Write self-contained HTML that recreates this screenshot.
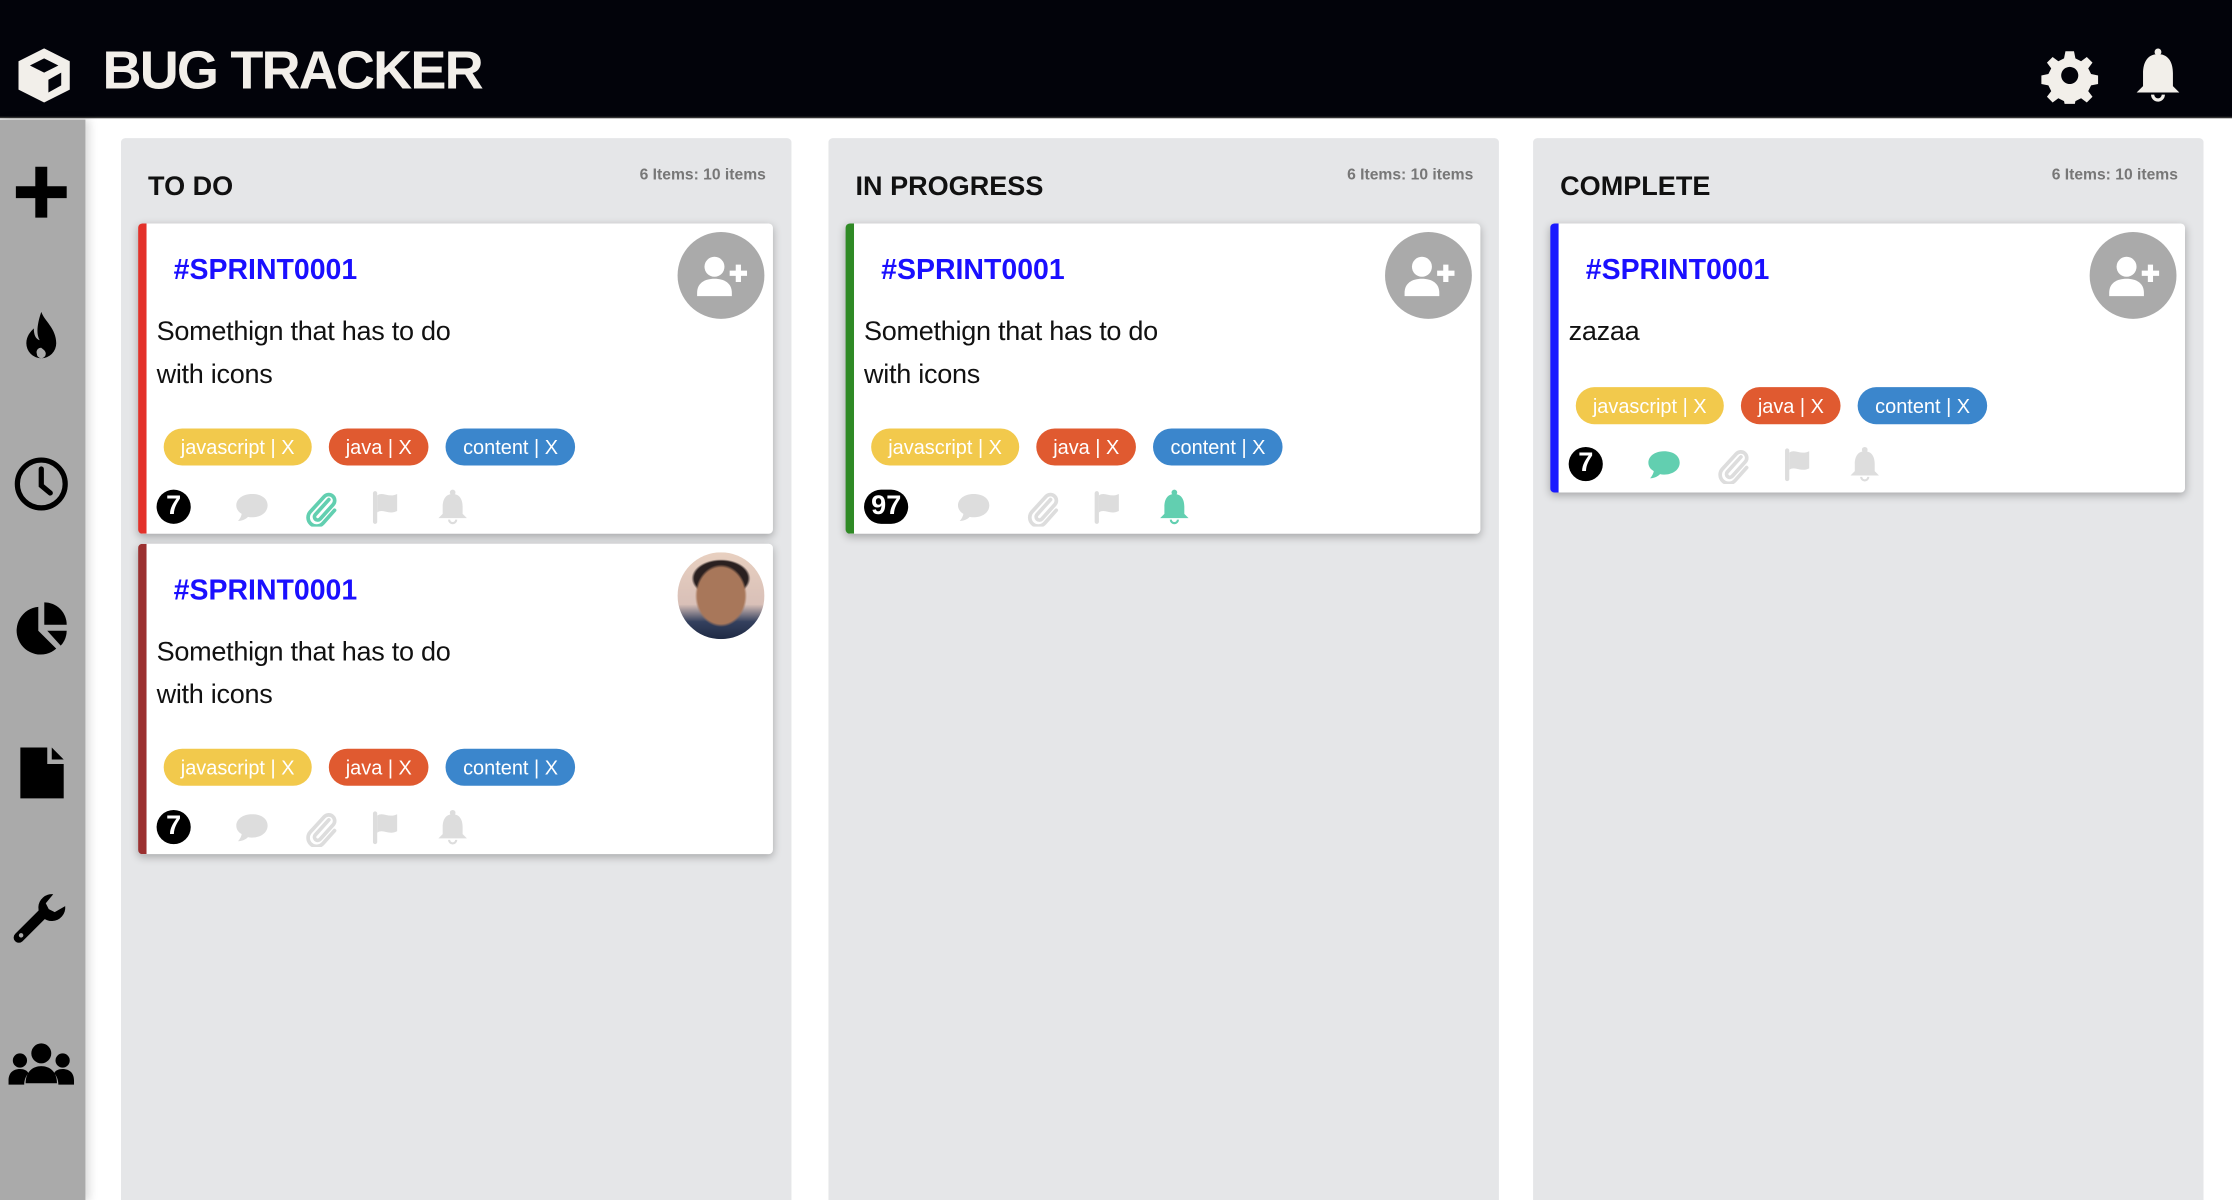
<!DOCTYPE html>
<html><head><meta charset="utf-8">
<style>
*{margin:0;padding:0;box-sizing:border-box}
html,body{width:2232px;height:1200px;overflow:hidden;background:#fff;font-family:"Liberation Sans",sans-serif}
#s{width:1568px;height:843px;transform:scale(1.423469);transform-origin:0 0;position:relative;background:#fff}
.hd{position:absolute;left:0;top:0;width:1568px;height:83px;background:#02030a;border-bottom:1px solid #333}
.ttl{position:absolute;left:72px;top:29px;font-size:38px;font-weight:bold;color:#f2efea;letter-spacing:-1.3px}
.sb{position:absolute;left:0;top:84px;width:60px;height:760px;background:#aaa;box-shadow:3px 0 6px rgba(0,0,0,.15)}
.sb svg{position:absolute;left:8px;width:42px;height:42px}
.col{position:absolute;top:97px;width:471px;height:760px;background:#e5e6e8;border-radius:3px}
.ch{position:absolute;left:19px;top:24px;font-size:19px;font-weight:bold;color:#111}
.cn{position:absolute;right:18px;top:20px;font-size:11px;font-weight:bold;color:#777}
.card{position:absolute;left:12px;width:446px;background:#fff;border-left:6px solid red;border-radius:3px;box-shadow:0 2px 6px rgba(0,0,0,.28)}
.sp{position:absolute;left:19px;top:22px;font-size:20px;font-weight:bold;color:#1a0fff}
.ds{position:absolute;left:7px;top:62px;font-size:19px;line-height:30px;color:#111;letter-spacing:-0.2px}
.tags{position:absolute;left:12px;display:flex;gap:12px}
.tg{height:26px;border-radius:13px;color:#fff;font-size:14px;line-height:26px;padding:0 12px}
.y{background:#f2c94c}.r{background:#e05a30}.b{background:#3b86cc}
.ft{position:absolute;left:7px;height:30px;width:300px}
.ft > *{position:absolute}
.bd{left:0;top:3px;height:24px;min-width:24px;border-radius:12px;background:#000;color:#fff;font-size:19px;font-weight:bold;line-height:24px;text-align:center;padding:0 3px}
.ft svg{width:28px;height:28px;top:1px}
.av{position:absolute;right:6px;top:6px;width:61px;height:61px;border-radius:50%;background:#aaa}
</style></head><body><div id="s">
<svg width="0" height="0" style="position:absolute">
<defs>
<symbol id="cm" viewBox="0 0 28 28"><path d="M14 5C7.5 5 3 8.5 3 13c0 2.6 1.5 4.7 3.8 6-.3 1.8-1.3 3.5-2.6 5 3 0 5.5-1.3 7-2.9.9.2 1.8.3 2.8.3 6.5 0 11-3.6 11-8.4S20.5 5 14 5z" fill="currentColor"/></symbol>
<symbol id="cl" viewBox="0 0 28 28"><path d="M20 9l-9.5 10.5a2.3 2.3 0 0 0 3.4 3.1L23 12.5a4.2 4.2 0 0 0-6.2-5.7L7 17.5a6 6 0 0 0 8.9 8.1L24 16.5" fill="none" stroke="currentColor" stroke-width="2.6" stroke-linecap="round"/></symbol>
<symbol id="fl" viewBox="0 0 28 28"><rect x="4" y="3" width="3" height="23" rx="1.5" fill="currentColor"/><path d="M7 6c4-3 8 2 14-1v12c-6 3-10-2-14 1z" fill="currentColor"/></symbol>
<symbol id="bl" viewBox="0 0 28 28"><circle cx="14" cy="4" r="2" fill="currentColor"/><path d="M14 5c-5 0-7 4-7 9v5l-3 3h20l-3-3v-5c0-5-2-9-7-9z" fill="currentColor"/><path d="M11.5 23a2.5 2.5 0 0 0 5 0" fill="none" stroke="currentColor" stroke-width="1.5"/></symbol>
<symbol id="up" viewBox="0 0 40 40"><circle cx="17" cy="16" r="4.6" fill="#fff"/><path d="M9 28c0-4.5 3.5-6.5 8-6.5s8 2 8 6.5v1.5H9z" fill="#fff"/><path d="M28 15v8M24 19h8" stroke="#fff" stroke-width="2.4"/></symbol>
</defs></svg>

<div class="hd">
<svg style="position:absolute;left:10px;top:32px" width="42" height="42" viewBox="0 0 42 42"><path d="M21 2L39 11v20L21 40 3 31V11z" fill="#f2efea"/><path d="M21 9L31 14 21 19 11 14z" fill="#02030a"/><path d="M24 24l9-5v9l-9 5z" fill="#02030a"/></svg>
<div class="ttl">BUG TRACKER</div>
<svg style="position:absolute;left:1434px;top:33px" width="40" height="40" viewBox="0 0 40 40"><path fill="#f2efea" fill-rule="evenodd" d="M17 3h6l1 5 4 2 4-3 4 4-3 4 2 4 5 1v6l-5 1-2 4 3 4-4 4-4-3-4 2-1 5h-6l-1-5-4-2-4 3-4-4 3-4-2-4-5-1v-6l5-1 2-4-3-4 4-4 4 3 4-2zM20 14a6 6 0 1 0 0.01 0z"/></svg>
<svg style="position:absolute;left:1495px;top:31px" width="42" height="44" viewBox="0 0 28 28"><circle cx="14" cy="3" r="1.6" fill="#f2efea"/><path d="M14 4c-5 0-7 4-7 9v6l-3 3h20l-3-3v-6c0-5-2-9-7-9z" fill="#f2efea"/><path d="M11.5 23a2.5 2.5 0 0 0 5 0" fill="none" stroke="#f2efea" stroke-width="1.5"/></svg>
</div>

<div class="sb">
<svg style="top:30px" viewBox="0 0 40 40"><path d="M16 3h8v13h13v8H24v13h-8V24H3v-8h13z" fill="#000"/></svg>
<svg style="top:133px" viewBox="0 0 40 40"><path d="M20 2c2 6 10 11 10 21a10 10 0 0 1-20 0c0-5 3-8 5-10 0 4 1 7 4 8-3-5-1-13 1-19zM20 26a3 3 0 0 0-3 4 3 3 0 0 0 6 0c0-2-2-3-3-4z" fill="#000" fill-rule="evenodd"/></svg>
<svg style="top:235px" viewBox="0 0 40 40"><circle cx="20" cy="20" r="16" fill="none" stroke="#000" stroke-width="3.5"/><path d="M20 10v11l6 5" fill="none" stroke="#000" stroke-width="3.5" stroke-linecap="round"/></svg>
<svg style="top:336px" viewBox="0 0 40 40"><path d="M18 6v16l12 12A16 16 0 1 1 18 6z" fill="#000"/><path d="M22 3a15 15 0 0 1 15 15H22z" fill="#000"/><path d="M24 22h13a15 15 0 0 1-4 10z" fill="#000"/></svg>
<svg style="top:438px" viewBox="0 0 40 40"><path d="M6 3h18v11h11v23H6z" fill="#000"/><path d="M27 3l8 8h-8z" fill="#000"/></svg>
<svg style="top:540px" viewBox="0 0 40 40"><path d="M5 33L21 17" stroke="#000" stroke-width="7" stroke-linecap="round"/><path d="M36 12a9 9 0 1 1-8-8l-5 6 2 4 4 2z" fill="#000"/><circle cx="6.5" cy="31.5" r="1.5" fill="#aaa"/></svg>
<svg style="top:643px;left:4px;width:50px" viewBox="0 0 50 40"><circle cx="25" cy="12" r="7" fill="#000"/><circle cx="10" cy="17" r="5" fill="#000"/><circle cx="40" cy="17" r="5" fill="#000"/><path d="M14 33c0-8 5-12 11-12s11 4 11 12z" fill="#000"/><path d="M2 31c0-5 3-8 8-8 3 0 5 1 6 3-2 2-3 5-3 8H2zM48 31c0-5-3-8-8-8-3 0-5 1-6 3 2 2 3 5 3 8h11z" fill="#000"/></svg>
</div>

<!-- TO DO -->
<div class="col" style="left:85px">
<div class="ch">TO DO</div><div class="cn">6 Items: 10 items</div>
<div class="card" style="top:60px;height:218px;border-left-color:#e3312a">
<div class="sp">#SPRINT0001</div>
<div class="ds">Somethign that has to do<br>with icons</div>
<div class="av"><svg width="61" height="61" viewBox="0 0 40 40"><use href="#up"/></svg></div>
<div class="tags" style="top:144px"><span class="tg y">javascript | X</span><span class="tg r">java | X</span><span class="tg b">content | X</span></div>
<div class="ft" style="top:184px"><span class="bd">7</span>
<svg style="left:53px;color:#ddd"><use href="#cm"/></svg><svg style="left:101px;color:#62cfb0"><use href="#cl"/></svg><svg style="left:148px;color:#ddd"><use href="#fl"/></svg><svg style="left:194px;color:#ddd"><use href="#bl"/></svg></div>
</div>
<div class="card" style="top:285px;height:218px;border-left-color:#9b3030">
<div class="sp">#SPRINT0001</div>
<div class="ds">Somethign that has to do<br>with icons</div>
<div class="av" style="background:radial-gradient(ellipse 30% 36% at 50% 50%,#a8775a 0 90%,transparent 100%),radial-gradient(ellipse 34% 22% at 50% 30%,#2a2020 0 90%,transparent 100%),linear-gradient(180deg,#e8d0c0 0%,#d9c0b8 60%,#34405e 80%,#1f2a44 100%)"></div>
<div class="tags" style="top:144px"><span class="tg y">javascript | X</span><span class="tg r">java | X</span><span class="tg b">content | X</span></div>
<div class="ft" style="top:184px"><span class="bd">7</span>
<svg style="left:53px;color:#ddd"><use href="#cm"/></svg><svg style="left:101px;color:#ddd"><use href="#cl"/></svg><svg style="left:148px;color:#ddd"><use href="#fl"/></svg><svg style="left:194px;color:#ddd"><use href="#bl"/></svg></div>
</div>
</div>

<!-- IN PROGRESS -->
<div class="col" style="left:582px">
<div class="ch">IN PROGRESS</div><div class="cn">6 Items: 10 items</div>
<div class="card" style="top:60px;height:218px;border-left-color:#2f8a25">
<div class="sp">#SPRINT0001</div>
<div class="ds">Somethign that has to do<br>with icons</div>
<div class="av"><svg width="61" height="61" viewBox="0 0 40 40"><use href="#up"/></svg></div>
<div class="tags" style="top:144px"><span class="tg y">javascript | X</span><span class="tg r">java | X</span><span class="tg b">content | X</span></div>
<div class="ft" style="top:184px"><span class="bd" style="left:0;padding:0 5px">97</span>
<svg style="left:63px;color:#ddd"><use href="#cm"/></svg><svg style="left:111px;color:#ddd"><use href="#cl"/></svg><svg style="left:158px;color:#ddd"><use href="#fl"/></svg><svg style="left:204px;color:#62cfb0"><use href="#bl"/></svg></div>
</div>
</div>

<!-- COMPLETE -->
<div class="col" style="left:1077px">
<div class="ch">COMPLETE</div><div class="cn">6 Items: 10 items</div>
<div class="card" style="top:60px;height:189px;border-left-color:#1a1aff">
<div class="sp">#SPRINT0001</div>
<div class="ds">zazaa</div>
<div class="av"><svg width="61" height="61" viewBox="0 0 40 40"><use href="#up"/></svg></div>
<div class="tags" style="top:115px"><span class="tg y">javascript | X</span><span class="tg r">java | X</span><span class="tg b">content | X</span></div>
<div class="ft" style="top:154px"><span class="bd">7</span>
<svg style="left:53px;color:#62cfb0"><use href="#cm"/></svg><svg style="left:101px;color:#ddd"><use href="#cl"/></svg><svg style="left:148px;color:#ddd"><use href="#fl"/></svg><svg style="left:194px;color:#ddd"><use href="#bl"/></svg></div>
</div>
</div>

</div></body></html>
